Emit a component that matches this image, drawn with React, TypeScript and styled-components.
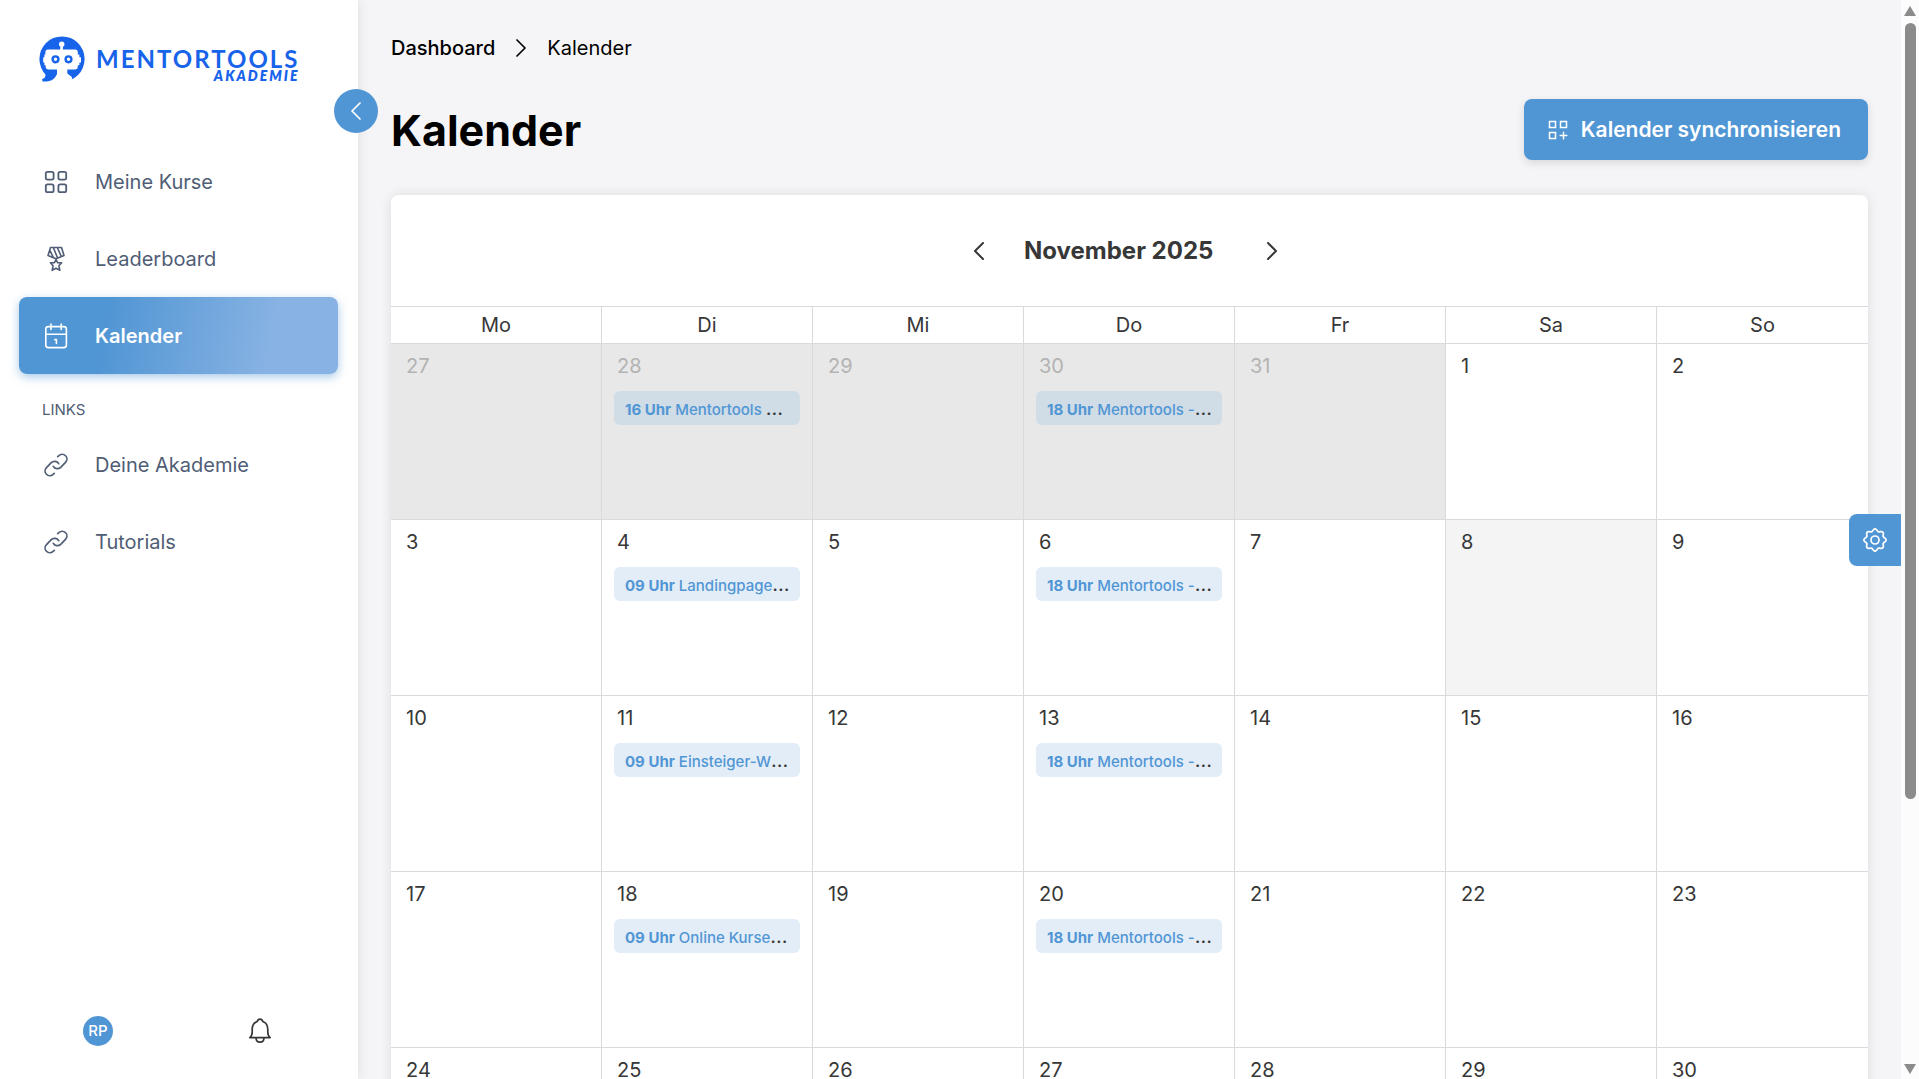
import React from "react";
import styled, { createGlobalStyle, css } from "styled-components";

const color = {
  primary: "#5196d4",
  primaryLight: "#87b2e3",
  page: "#f5f5f8",
  nav: "#4f5d75",
  text: "#373737",
  muted: "#b3b3b3",
  line: "#d9dadb",
  logo: "#1763ea",
};

const GlobalStyle = createGlobalStyle`
  *, *::before, *::after { box-sizing: border-box; }
  html, body, #root { height: 100%; }
  body {
    margin: 0;
    overflow: hidden;
    background: ${color.page};
    color: ${color.text};
    font-family: Inter, "Liberation Sans", sans-serif;
    font-size: 20px;
    line-height: 28px;
  }
  button { font: inherit; border: 0; padding: 0; cursor: pointer; background: none; }
  a { color: inherit; text-decoration: none; }
  svg { display: block; flex: none; }
`;

const Shell = styled.div`
  display: grid;
  grid-template-columns: 358px minmax(0, 1fr) 18px;
  height: 100vh;
`;

/* Sidebar */

const Sidebar = styled.aside`
  position: relative;
  z-index: 2;
  display: flex;
  flex-direction: column;
  background: #fff;
  box-shadow: 0 0 12px rgba(0, 0, 0, 0.1);
`;

const Brand = styled.a`
  display: flex;
  align-items: center;
  gap: 11px;
  height: 143px;
  padding: 36px 0 61px 39px;
`;

const Wordmark = styled.span`
  display: flex;
  flex-direction: column;
  padding-top: 13px;
  color: ${color.logo};
  font-family: Lato, "Liberation Sans", sans-serif;
`;

const WordmarkName = styled.span`
  font-size: 24px;
  font-weight: 700;
  line-height: 20px;
  letter-spacing: 2px;
`;

const WordmarkSub = styled.span`
  align-self: flex-end;
  font-size: 14px;
  font-weight: 800;
  font-style: italic;
  line-height: 14px;
  letter-spacing: 2px;
`;

const CollapseButton = styled.button`
  position: absolute;
  top: 89px;
  right: -20px;
  display: grid;
  place-items: center;
  width: 44px;
  height: 44px;
  border-radius: 50%;
  background: ${color.primary};
  color: #fff;
`;

const NavList = styled.ul`
  margin: 0;
  padding: 0 20px 0 19px;
  list-style: none;
`;

const NavLink = styled.a<{ $active?: boolean }>`
  display: flex;
  align-items: center;
  gap: 27px;
  height: 77px;
  padding-left: 25px;
  border-radius: 8px;
  color: ${color.nav};
  ${(p) =>
    p.$active &&
    css`
      background: linear-gradient(100deg, ${color.primary} 28%, ${color.primaryLight} 78%);
      box-shadow: 0 3px 10px rgba(81, 150, 212, 0.5);
      color: #fff;
      font-weight: 600;
    `}
`;

const NavIcon = styled.span`
  display: grid;
  place-items: center;
  width: 24px;
`;

const NavHeading = styled.h2`
  margin: 0;
  padding: 26px 0 6px 42px;
  color: ${color.nav};
  font-size: 15px;
  font-weight: 400;
  line-height: 20px;
`;

const SidebarFooter = styled.footer`
  display: grid;
  grid-template-columns: 1fr 1fr;
  place-items: center;
  margin-top: auto;
  padding: 0 17px 33px;
`;

const Avatar = styled.button`
  width: 30px;
  height: 30px;
  border-radius: 50%;
  background: ${color.primary};
  color: #fff;
  font-size: 15px;
  font-weight: 500;
  line-height: 30px;
`;

const IconButton = styled.button`
  display: grid;
  place-items: center;
  width: 30px;
  height: 30px;
  color: ${color.text};
`;

/* Main area */

const Main = styled.main`
  height: 100vh;
  overflow: hidden;
  padding: 34px 33px 0;
`;

const Breadcrumbs = styled.nav`
  display: flex;
  align-items: center;
  gap: 21px;
  color: #000;
`;

const Crumb = styled.a`
  font-weight: 500;
`;

const TitleRow = styled.header`
  display: flex;
  align-items: center;
  justify-content: space-between;
  margin: 37px 0 35px;
`;

const Title = styled.h1`
  margin: 0;
  color: #000;
  font-size: 43px;
  font-weight: 700;
  line-height: 58px;
`;

const SyncButton = styled.button`
  display: flex;
  align-items: center;
  gap: 13px;
  height: 61px;
  padding: 0 27px 0 24px;
  border-radius: 8px;
  background: ${color.primary};
  box-shadow: 0 3px 8px rgba(0, 0, 0, 0.12);
  color: #fff;
  font-size: 21px;
  font-weight: 600;
`;

const Card = styled.section`
  overflow: hidden;
  border-radius: 8px;
  background: #fff;
`;

const CardShadow = styled.div`
  border-radius: 8px;
  box-shadow: 0 0 12px rgba(0, 0, 0, 0.1);
`;

const MonthBar = styled.div`
  display: flex;
  align-items: center;
  justify-content: center;
  gap: 30px;
  height: 111px;
  padding-right: 8px;
`;

const MonthName = styled.h2`
  min-width: 203px;
  margin: 0;
  font-size: 24px;
  font-weight: 700;
  line-height: 32px;
`;

const Grid = styled.table`
  width: 100%;
  table-layout: fixed;
  border-spacing: 0;
`;

const Weekday = styled.th`
  height: 37px;
  padding: 0;
  border-top: 1px solid ${color.line};
  font-weight: 400;
  &:not(:last-child) {
    border-right: 1px solid ${color.line};
  }
`;

const Day = styled.td<{ $tone: Tone }>`
  height: 176px;
  padding: 8px 12px;
  border-top: 1px solid ${color.line};
  background: ${(p) => (p.$tone === "outside" ? "#e8e8e8" : p.$tone === "today" ? "#f4f4f4" : "#fff")};
  color: ${(p) => (p.$tone === "outside" ? color.muted : color.text)};
  vertical-align: top;
  &:not(:last-child) {
    border-right: 1px solid ${color.line};
  }
`;

const DayNumber = styled.time`
  display: block;
  padding-left: 3px;
`;

const EventChip = styled.button<{ $outside: boolean }>`
  display: block;
  width: 100%;
  height: 34px;
  margin-top: 11px;
  padding: 2px 11px 0;
  overflow: hidden;
  border-radius: 6px;
  background: ${(p) => (p.$outside ? "#d0dce6" : "#e3edf8")};
  color: ${color.text};
  text-align: left;
  white-space: nowrap;
`;

const EventLabel = styled.span`
  color: ${color.primary};
  font-size: 15px;
  font-weight: 500;
`;

const EventTime = styled.strong`
  font-weight: 700;
`;

/* Floating settings tab and scroll rail */

const SettingsTab = styled.button`
  position: fixed;
  top: 514px;
  right: 18px;
  z-index: 3;
  display: grid;
  place-items: center;
  width: 52px;
  height: 52px;
  border-radius: 8px 0 0 8px;
  background: ${color.primary};
  color: #fff;
`;

const Rail = styled.div`
  display: flex;
  flex-direction: column;
  align-items: center;
  gap: 7px;
  padding: 6px 0 5px;
  background: #fcfcfc;
`;

const RailTrack = styled.div`
  flex: 1;
  width: 11px;
`;

const RailThumb = styled.div`
  height: 75%;
  border-radius: 6px;
  background: #8b8b8b;
`;

const RailArrow = styled.span<{ $down?: boolean }>`
  width: 12px;
  height: 10px;
  background: #8b8b8b;
  clip-path: ${(p) => (p.$down ? "polygon(0 0, 100% 0, 50% 100%)" : "polygon(50% 0, 100% 100%, 0 100%)")};
`;

/* Icons */

const stroke = {
  fill: "none",
  stroke: "currentColor",
  strokeWidth: 1.5,
  strokeLinecap: "round" as const,
  strokeLinejoin: "round" as const,
  "aria-hidden": true,
};

const LogoMark = () => (
  <svg width="46" height="46" viewBox="0 0 46 46" aria-hidden="true">
    <circle cx="23" cy="23" r="22.6" fill={color.logo} />
    <path d="M17.900 31h10.400v6.500l4.300 3.300 1.100 3.600-.7 2.600H9l8.900-8.800z" fill="#fff" />
    <path d="M5.500 32h12.400v5.400c-1.500 5.600-6 8.600-14.400 8.100l-.4-2.600c2.400-.4 3.600-2.200 3.400-5z" fill={color.logo} />
    <path
      d="M9 13.400h12.300v-2.800h2.600v2.800h12.300a2.600 2.600 0 0 1 2.600 2.600v2.400h1.600v2.800H42v5.400h-1.600v2.600h-1.600v1.800a2.400 2.400 0 0 1-2.400 2.400H9.200a2.600 2.600 0 0 1-2.600-2.400v-1.800H5.400v-2.600H4.200v-5.400h1.200v-2.800h1V16A2.600 2.600 0 0 1 9 13.400z"
      fill="#fff"
    />
    <circle cx="22.700" cy="8.200" r="2.700" fill="#fff" />
    <g fill="none" stroke={color.logo} strokeWidth="2.400">
      <circle cx="16.500" cy="23.300" r="2.900" />
      <circle cx="29.500" cy="23.300" r="2.900" />
    </g>
  </svg>
);

const GridIcon = () => (
  <svg width="24" height="24" viewBox="0 0 24 24" {...stroke} strokeWidth={1.8}>
    <rect x="1.800" y="1.800" width="7.800" height="7.800" rx="1.800" />
    <rect x="14.400" y="1.800" width="7.800" height="7.800" rx="1.800" />
    <rect x="1.800" y="14.400" width="7.800" height="7.800" rx="1.800" />
    <rect x="14.400" y="14.400" width="7.800" height="7.800" rx="1.800" />
  </svg>
);

const MedalIcon = () => (
  <svg width="24" height="26" viewBox="0 0 24 26" {...stroke} strokeWidth={1.6}>
    <path d="M6.500 1.500h11L20 9.500l-8 3.300-8-3.300zM9.300 1.500l4.300 10.500M13.300 1.500l4 9M6 4.500l3.500 7.300" />
    <path d="m12 13.500 1.700 3.300h3.900l-2.700 3 1 4.500-3.900-2-3.900 2 1-4.500-2.700-3h3.900z" />
  </svg>
);

const CalendarIcon = () => (
  <svg width="24" height="26" viewBox="0 0 24 26" {...stroke} strokeWidth={1.6}>
    <rect x="1.800" y="3.600" width="20.600" height="21" rx="2.600" />
    <path d="M1.800 11.200h20.600M7 1v5.400M17.200 1v5.400M10.800 16.600h1.600v3.800" />
  </svg>
);

const LinkIcon = () => (
  <svg width="24" height="24" viewBox="0 0 24 24" {...stroke} strokeWidth={1.7}>
    <path d="M13.700 3.700l1.200-1a4.700 4.700 0 0 1 6.600 6.700l-4.800 4.900a4.700 4.700 0 0 1-7.400-1" />
    <path d="M10.300 20.300l-1.200 1a4.700 4.700 0 0 1-6.600-6.700l4.800-4.900a4.700 4.700 0 0 1 7.400 1" />
  </svg>
);

const BellIcon = () => (
  <svg width="24" height="26" viewBox="0 0 24 26" {...stroke} strokeWidth={1.7}>
    <path d="M1.800 19.600c2-1.300 2.400-3 2.400-5.600v-2.500c0-4 2-6.900 5-8 .4-1.500 1.400-2.300 2.800-2.300s2.400.8 2.800 2.300c3 1.100 5 4 5 8V14c0 2.600.4 4.300 2.400 5.600z" />
    <path d="M8 19.800c0 2.800 1.600 4.400 4 4.400s4-1.600 4-4.400" />
  </svg>
);

const SyncIcon = () => (
  <svg width="20" height="20" viewBox="0 0 20 20" {...stroke} strokeLinejoin="miter">
    <rect x="1.500" y="1.500" width="6" height="6" />
    <rect x="12.500" y="1.500" width="6" height="6" />
    <rect x="1.500" y="12.500" width="6" height="6" />
    <path d="M15.500 12.300v6.600M12.200 15.600h6.600" />
  </svg>
);

const gearOutline =
  Array.from({ length: 96 }, (_, i) => {
    const angle = (i / 96) * Math.PI * 2;
    const radius = 10 + 1.1 * Math.cos(8 * angle);
    return `${i ? "L" : "M"}${(13 + radius * Math.cos(angle)).toFixed(2)} ${(13 + radius * Math.sin(angle)).toFixed(2)}`;
  }).join("") + "Z";

const GearIcon = () => (
  <svg width="26" height="26" viewBox="0 0 26 26" {...stroke} strokeWidth={1.7}>
    <path d={gearOutline} />
    <circle cx="13" cy="13" r="4" />
  </svg>
);

const Chevron = ({ dir, weight = 1.7 }: { dir: "left" | "right"; weight?: number }) => (
  <svg width="10" height="18" viewBox="0 0 10 18" {...stroke} strokeWidth={weight}>
    <path d={dir === "left" ? "M9 1 1 9l8 8" : "m1 1 8 8-8 8"} />
  </svg>
);

/* Data */

type Tone = "normal" | "outside" | "today";
type CalendarEvent = { time: string; title: string };

const weekdays = ["Mo", "Di", "Mi", "Do", "Fr", "Sa", "So"];

const gridStart = new Date(2025, 9, 27);
const today = new Date(2025, 10, 8).getTime();

const events: Record<string, CalendarEvent> = {
  "10-28": { time: "16 Uhr", title: "Mentortools " },
  "10-30": { time: "18 Uhr", title: "Mentortools -" },
  "11-4": { time: "09 Uhr", title: "Landingpage" },
  "11-6": { time: "18 Uhr", title: "Mentortools -" },
  "11-11": { time: "09 Uhr", title: "Einsteiger-W" },
  "11-13": { time: "18 Uhr", title: "Mentortools -" },
  "11-18": { time: "09 Uhr", title: "Online Kurse" },
  "11-20": { time: "18 Uhr", title: "Mentortools -" },
};

const weeks = Array.from({ length: 5 }, (_, week) =>
  Array.from({ length: 7 }, (_, day) => {
    const date = new Date(gridStart.getFullYear(), gridStart.getMonth(), gridStart.getDate() + week * 7 + day);
    const month = date.getMonth() + 1;
    const tone: Tone = month !== 11 ? "outside" : date.getTime() === today ? "today" : "normal";
    return {
      number: date.getDate(),
      iso: `2025-${month}-${String(date.getDate()).padStart(2, "0")}`,
      tone,
      event: events[`${month}-${date.getDate()}`],
    };
  }),
);

const mainLinks = [
  { label: "Meine Kurse", icon: <GridIcon /> },
  { label: "Leaderboard", icon: <MedalIcon /> },
  { label: "Kalender", icon: <CalendarIcon />, active: true },
];

const extraLinks = [
  { label: "Deine Akademie", icon: <LinkIcon /> },
  { label: "Tutorials", icon: <LinkIcon /> },
];

const Nav = ({ items }: { items: { label: string; icon: React.ReactNode; active?: boolean }[] }) => (
  <NavList>
    {items.map((item) => (
      <li key={item.label}>
        <NavLink href="#" $active={item.active} aria-current={item.active ? "page" : undefined}>
          <NavIcon>{item.icon}</NavIcon>
          {item.label}
        </NavLink>
      </li>
    ))}
  </NavList>
);

export default function App() {
  return (
    <>
      <GlobalStyle />
      <Shell>
        <Sidebar>
          <Brand href="#">
            <LogoMark />
            <Wordmark>
              <WordmarkName>MENTORTOOLS</WordmarkName>
              <WordmarkSub>AKADEMIE</WordmarkSub>
            </Wordmark>
          </Brand>
          <CollapseButton aria-label="Menü einklappen">
            <Chevron dir="left" />
          </CollapseButton>
          <nav>
            <Nav items={mainLinks} />
            <NavHeading>LINKS</NavHeading>
            <Nav items={extraLinks} />
          </nav>
          <SidebarFooter>
            <Avatar>RP</Avatar>
            <IconButton aria-label="Benachrichtigungen">
              <BellIcon />
            </IconButton>
          </SidebarFooter>
        </Sidebar>

        <Main>
          <Breadcrumbs>
            <Crumb href="#">Dashboard</Crumb>
            <Chevron dir="right" />
            <span>Kalender</span>
          </Breadcrumbs>
          <TitleRow>
            <Title>Kalender</Title>
            <SyncButton>
              <SyncIcon />
              Kalender synchronisieren
            </SyncButton>
          </TitleRow>
          <CardShadow>
            <Card>
              <MonthBar>
                <IconButton aria-label="Vorheriger Monat">
                  <Chevron dir="left" weight={2} />
                </IconButton>
                <MonthName>November 2025</MonthName>
                <IconButton aria-label="Nächster Monat">
                  <Chevron dir="right" weight={2} />
                </IconButton>
              </MonthBar>
              <Grid>
                <thead>
                  <tr>
                    {weekdays.map((name) => (
                      <Weekday key={name} scope="col">
                        {name}
                      </Weekday>
                    ))}
                  </tr>
                </thead>
                <tbody>
                  {weeks.map((week) => (
                    <tr key={week[0].iso}>
                      {week.map((day) => (
                        <Day key={day.iso} $tone={day.tone}>
                          <DayNumber dateTime={day.iso}>{day.number}</DayNumber>
                          {day.event && (
                            <EventChip $outside={day.tone === "outside"}>
                              <EventLabel>
                                <EventTime>{day.event.time}</EventTime> {day.event.title}
                              </EventLabel>
                              ...
                            </EventChip>
                          )}
                        </Day>
                      ))}
                    </tr>
                  ))}
                </tbody>
              </Grid>
            </Card>
          </CardShadow>
        </Main>

        <Rail aria-hidden="true">
          <RailArrow />
          <RailTrack>
            <RailThumb />
          </RailTrack>
          <RailArrow $down />
        </Rail>
      </Shell>
      <SettingsTab aria-label="Einstellungen">
        <GearIcon />
      </SettingsTab>
    </>
  );
}
